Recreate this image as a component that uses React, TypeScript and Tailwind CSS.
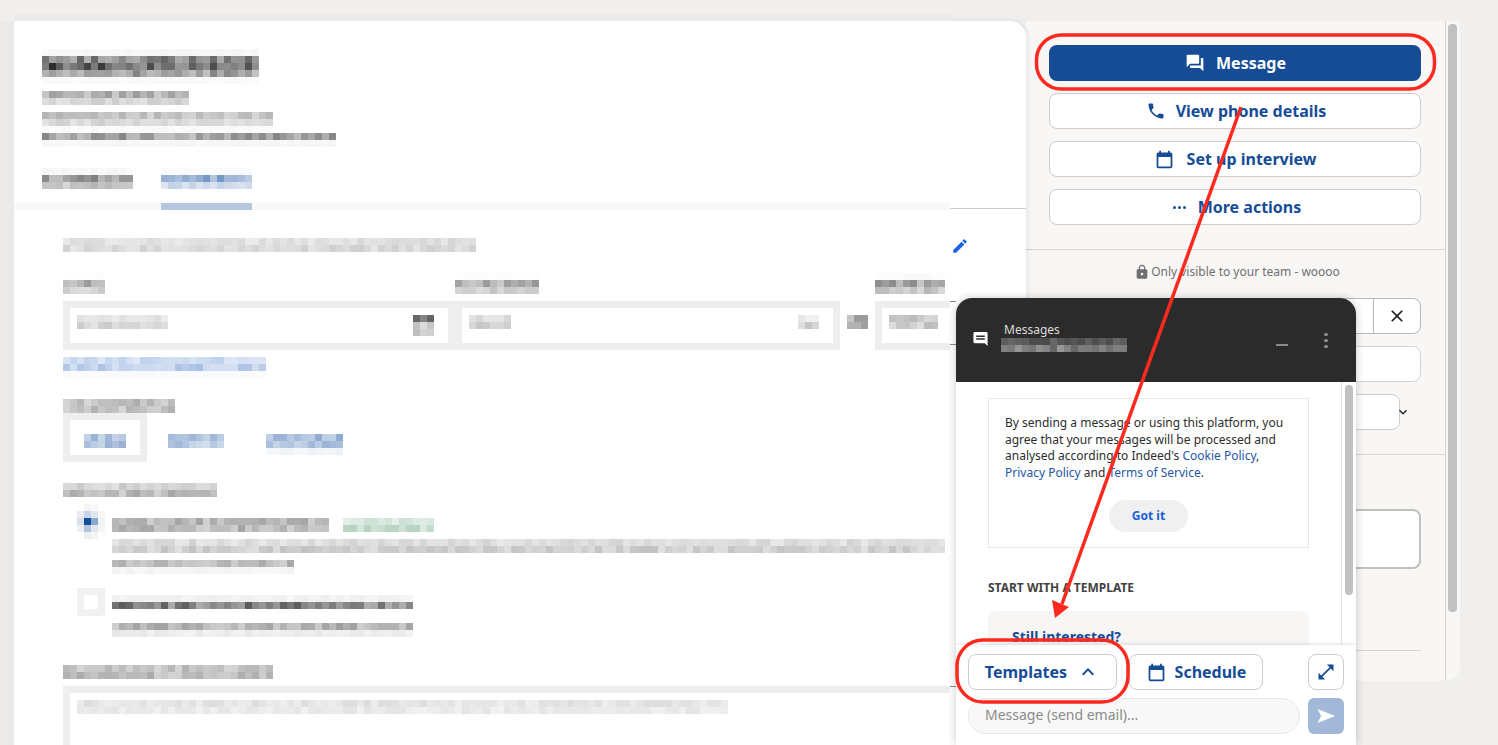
import React from 'react';

const blue = 'text-[#164c96]';

// pixelated block, the reference has its private text blurred out in 7px cells
function Mosaic({
  cols,
  rows,
  rgb = '0,0,0',
  seed = 1,
  className = '',
}: {
  cols: number;
  rows: number[];
  rgb?: string;
  seed?: number;
  className?: string;
}) {
  let n = seed * 7919 + cols * 31;
  const next = () => {
    n = (n * 1103515245 + 12345) & 0x7fffffff;
    return ((n >> 8) % 1000) / 1000;
  };
  return (
    <div className={`flex flex-col ${className}`}>
      {rows.map((a, r) => (
        <div key={r} className="flex">
          {Array.from({ length: cols }).map((_, c) => (
            <div
              key={c}
              className="h-[7px] w-[7px] shrink-0"
              style={{ backgroundColor: `rgba(${rgb},${(a * (0.65 + next() * 0.7)).toFixed(3)})` }}
            />
          ))}
        </div>
      ))}
    </div>
  );
}

function Icon({ d, className = '' }: { d: string; className?: string }) {
  return (
    <svg viewBox="0 0 24 24" fill="currentColor" className={className}>
      <path d={d} />
    </svg>
  );
}

const forum = 'M21 6h-2v9H6v2c0 .55.45 1 1 1h11l4 4V7c0-.55-.45-1-1-1zm-4 6V3c0-.55-.45-1-1-1H3c-.55 0-1 .45-1 1v14l4-4h10c.55 0 1-.45 1-1z';
const phone = 'M6.62 10.79c1.44 2.83 3.76 5.14 6.59 6.59l2.2-2.2c.27-.27.67-.36 1.02-.24 1.12.37 2.33.57 3.57.57.55 0 1 .45 1 1V20c0 .55-.45 1-1 1-9.39 0-17-7.61-17-17 0-.55.45-1 1-1h3.5c.55 0 1 .45 1 1 0 1.25.2 2.45.57 3.57.11.35.03.74-.25 1.02l-2.2 2.2z';
const calendar = 'M19 4h-1V2h-2v2H8V2H6v2H5c-1.1 0-2 .9-2 2v14c0 1.1.9 2 2 2h14c1.1 0 2-.9 2-2V6c0-1.1-.9-2-2-2zm0 16H5V9h14v11z';
const lock = 'M18 8h-1V6c0-2.76-2.24-5-5-5S7 3.24 7 6v2H6c-1.1 0-2 .9-2 2v10c0 1.1.9 2 2 2h12c1.1 0 2-.9 2-2V10c0-1.1-.9-2-2-2zm-6 9c-1.1 0-2-.9-2-2s.9-2 2-2 2 .9 2 2-.9 2-2 2zm3.1-9H8.9V6c0-1.71 1.39-3.1 3.1-3.1 1.71 0 3.1 1.39 3.1 3.1v2z';
const comment = 'M21.99 4c0-1.1-.89-2-1.99-2H4c-1.1 0-2 .9-2 2v12c0 1.1.9 2 2 2h14l4 4-.01-18zM18 13H6v-2h12v2zm0-4H6V7h12v2z';
const edit = 'M3 17.25V21h3.75L17.81 9.94l-3.75-3.75L3 17.25zM20.71 7.04c.39-.39.39-1.02 0-1.41l-2.34-2.34c-.39-.39-1.02-.39-1.41 0l-1.83 1.83 3.75 3.75 1.83-1.83z';
const expand = 'M21 11V3h-8l3.29 3.29-10 10L3 13v8h8l-3.29-3.29 10-10z';
const send = 'M2 20.5 23 12 2 3.5 6 12z';
const close = 'M19 6.41 17.59 5 12 10.59 6.41 5 5 6.41 10.59 12 5 17.59 6.41 19 12 13.41 17.59 19 19 17.59 13.41 12z';
const chevronUp = 'M7.41 15.41 12 10.83l4.59 4.58L18 14l-6-6-6 6z';
const chevronDown = 'M7.41 8.59 12 13.17l4.59-4.58L18 10l-6 6-6-6z';

function ActionButton({ icon, label }: { icon: React.ReactNode; label: string }) {
  return (
    <div className={`flex h-9 items-center justify-center gap-3 rounded-lg border border-[#cfcdca] bg-white text-base font-bold ${blue}`}>
      {icon}
      <span>{label}</span>
    </div>
  );
}

function BlurredForm() {
  return (
    <div className="w-[936px] shrink-0 overflow-hidden">
      <div className="pl-[28px] pt-[28px]">
        <Mosaic cols={31} rows={[0.03, 0.45, 0.62, 0.36, 0.02]} seed={2} />
        <Mosaic cols={21} rows={[0.3, 0.16]} seed={3} className="mt-[7px]" />
        <Mosaic cols={33} rows={[0.22, 0.15, 0.02]} seed={4} className="mt-[7px]" />
        <Mosaic cols={42} rows={[0.36, 0.03]} seed={5} />
        <div className="mt-[21px] flex gap-[28px]">
          <Mosaic cols={13} rows={[0.03, 0.38, 0.22]} seed={6} />
          <Mosaic cols={13} rows={[0.03, 0.45, 0.2]} rgb="22,80,160" seed={7} />
        </div>
      </div>
      <div className="mt-[14px] flex h-[7px]">
        <div className="w-[147px] bg-[#f8f8f7]" />
        <div className="w-[91px] bg-[#b5c6df]" />
        <div className="flex-1 bg-[#f8f8f7]" />
      </div>

      <div className="pl-[49px]">
        <Mosaic cols={59} rows={[0.12, 0.14]} seed={8} className="mt-[28px]" />

        <div className="mt-[21px] flex">
          <Mosaic cols={6} rows={[0.01, 0.32, 0.2]} seed={9} className="w-[392px] shrink-0" />
          <Mosaic cols={12} rows={[0.01, 0.32, 0.2]} seed={10} className="w-[420px] shrink-0" />
          <Mosaic cols={10} rows={[0.02, 0.34, 0.22]} seed={11} />
        </div>
        <div className="mt-[7px] flex">
          <div className="flex h-[49px] w-[392px] shrink-0 items-start justify-between border-[7px] border-[#eeeeee] px-[7px] pt-[7px]">
            <Mosaic cols={13} rows={[0.1, 0.16]} seed={12} />
            <Mosaic cols={3} rows={[0.5, 0.22, 0.2]} seed={13} className="mr-[7px]" />
          </div>
          <div className="flex h-[49px] w-[385px] shrink-0 items-start justify-between border-[7px] border-[#eeeeee] px-[7px] pt-[7px]">
            <Mosaic cols={6} rows={[0.13, 0.2]} seed={14} />
            <Mosaic cols={3} rows={[0.08, 0.2]} seed={15} className="mr-[7px]" />
          </div>
          <Mosaic cols={3} rows={[0.3, 0.3]} seed={16} className="mx-[7px] mt-[14px] shrink-0" />
          <div className="flex h-[49px] w-[100px] shrink-0 items-start gap-[7px] border-[7px] border-r-0 border-[#eeeeee] px-[7px] pt-[7px]">
            <Mosaic cols={7} rows={[0.2, 0.2]} seed={17} />
          </div>
        </div>
        <Mosaic cols={29} rows={[0.22, 0.3, 0.03]} rgb="40,100,190" seed={18} className="mt-[7px]" />

        <Mosaic cols={16} rows={[0.24, 0.24]} seed={19} className="mt-[21px]" />
        <div className="flex items-start gap-[21px]">
          <div className="h-[49px] w-[84px] border-[7px] border-[#eeeeee] px-[14px] pt-[14px]">
            <Mosaic cols={6} rows={[0.36, 0.36]} rgb="22,80,160" seed={20} />
          </div>
          <Mosaic cols={8} rows={[0.36, 0.3]} rgb="22,80,160" seed={21} className="mt-[21px]" />
          <Mosaic cols={11} rows={[0.36, 0.34, 0.06]} rgb="22,80,160" seed={22} className="ml-[21px] mt-[21px]" />
        </div>

        <Mosaic cols={22} rows={[0.18, 0.26]} seed={23} className="mt-[21px]" />

        <div className="mt-[7px] flex">
          <div className="ml-[14px] mr-[7px] grid h-[35px] w-[28px] shrink-0 grid-cols-[7px_7px_7px_7px] grid-rows-[7px_7px_7px_7px_7px]">
            <div className="bg-white" />
            <div className="bg-[#f4f4f4]" />
            <div className="bg-[#f8f8f8]" />
            <div className="bg-white" />
            <div className="bg-[#ebedf1]" />
            <div className="bg-[#c8d5e8]" />
            <div className="bg-[#e0e6ef]" />
            <div className="bg-[#f6f6f6]" />
            <div className="bg-[#d9e0ec]" />
            <div className="bg-[#134f9c]" />
            <div className="bg-[#8aa7d0]" />
            <div className="bg-[#f2f2f2]" />
            <div className="bg-[#eff0f3]" />
            <div className="bg-[#b3c6e0]" />
            <div className="bg-[#e0e6ef]" />
            <div className="bg-[#f6f6f6]" />
            <div className="bg-white" />
            <div className="bg-[#eeeeee]" />
            <div className="bg-[#f4f4f4]" />
            <div className="bg-white" />
          </div>
          <div className="pt-[14px]">
            <div className="flex gap-[14px]">
              <Mosaic cols={31} rows={[0.27, 0.26]} seed={25} />
              <Mosaic cols={13} rows={[0.2, 0.27]} rgb="50,130,80" seed={26} />
            </div>
            <Mosaic cols={119} rows={[0.13, 0.18]} seed={27} className="mt-[7px]" />
            <Mosaic cols={26} rows={[0.26, 0.04]} seed={28} className="mt-[7px]" />
          </div>
        </div>

        <div className="mt-[14px] flex">
          <div className="ml-[14px] mr-[7px] h-[28px] w-[28px] shrink-0 border-[7px] border-[#f1f1f1]" />
          <div className="pt-[7px]">
            <Mosaic cols={43} rows={[0.05, 0.48]} seed={29} />
            <Mosaic cols={43} rows={[0.28, 0.07]} seed={30} className="mt-[14px]" />
          </div>
        </div>

        <Mosaic cols={30} rows={[0.22, 0.25]} seed={31} className="mt-[28px]" />
        <div className="mt-[7px] h-[80px] border-l-[7px] border-t-[7px] border-[#eeeeee] pl-[7px] pt-[7px]">
          <Mosaic cols={93} rows={[0.1, 0.08]} seed={32} />
        </div>
      </div>
    </div>
  );
}

function ChatWindow() {
  return (
    <div className="absolute left-[956px] top-[298px] z-10 flex h-[447px] w-[400px] flex-col overflow-hidden rounded-t-2xl bg-white shadow-[0_0_8px_rgba(0,0,0,0.22)]">
      <div className="flex h-[84px] shrink-0 bg-[#2b2b2b] pt-[31px] text-[#e4e4e4]">
        <Icon d={comment} className="ml-[16px] mt-[1px] h-[18px] w-[17px] text-white" />
        <div className="ml-[15px] w-[272px]">
          <div className="-mt-[8px] text-xs leading-[18px] text-[#dddddd]">Messages</div>
          <Mosaic cols={18} rows={[0.22, 0.38]} rgb="255,255,255" seed={40} className="-ml-[3px] mt-[-1px]" />
        </div>
        <div className="mt-[15px] h-[2px] w-[12px] bg-[#8a8a8a]" />
        <div className="ml-[36px] mt-[4px] flex flex-col gap-[3px]">
          <div className="h-[3px] w-[4px] rounded-full bg-[#8a8a8a]" />
          <div className="h-[3px] w-[4px] rounded-full bg-[#8a8a8a]" />
          <div className="h-[3px] w-[4px] rounded-full bg-[#8a8a8a]" />
        </div>
      </div>

      <div className="relative flex min-h-0 flex-1">
        <div className="w-[385px] shrink-0 px-[32px] pt-[16px]">
          <div className="h-[150px] w-[321px] border border-[#e8e8e8] px-[16px] pt-[16px] text-xs leading-[16.67px] text-[#2d2d2d]">
            <p>
              By sending a message or using this platform, you agree that your messages will be processed and analysed according to Indeed's{' '}
              <span className="text-[#2557a7]">Cookie Policy</span>, <span className="text-[#2557a7]">Privacy Policy</span> and{' '}
              <span className="text-[#2557a7]">Terms of Service</span>.
            </p>
            <div className="mt-[18px] flex justify-center">
              <div className="flex h-[32px] w-[79px] items-center justify-center rounded-full bg-[#f0f0f0] text-xs font-bold text-[#1a5fd8]">
                Got it
              </div>
            </div>
          </div>
          <div className="mt-[31px] text-xs font-bold leading-[18px] text-[#424242]">START WITH A TEMPLATE</div>
          <div className="mt-[14px] h-[80px] w-[321px] rounded-lg bg-[#f7f6f5] pl-[24px] pt-[16px] text-sm font-bold text-[#164c96]">
            Still interested?
          </div>
        </div>
        <div className="flex-1 border-l border-[#e4e2e0] pl-[3px] pt-[3px]">
          <div className="h-[210px] w-[8px] rounded bg-[#c1c1c1]" />
        </div>

        <div className="absolute bottom-0 left-0 right-0 flex h-[100px] flex-col gap-[8px] bg-white px-[12px] pt-[9px] shadow-[0_-1px_3px_rgba(0,0,0,0.12)]">
          <div className="flex">
            <div className={`flex h-9 w-[149px] items-center justify-center gap-[9px] rounded-lg border border-[#cfcdca] text-base font-bold ${blue}`}>
              <span>Templates</span>
              <Icon d={chevronUp} className="h-6 w-6" />
            </div>
            <div className={`ml-[12px] flex h-9 w-[134px] items-center justify-center gap-[8px] rounded-lg border border-[#cfcdca] text-base font-bold ${blue}`}>
              <Icon d={calendar} className="h-[21px] w-[21px]" />
              <span>Schedule</span>
            </div>
            <div className={`ml-auto flex h-9 w-9 items-center justify-center rounded-lg border border-[#cfcdca] ${blue}`}>
              <Icon d={expand} className="h-[20px] w-[20px]" />
            </div>
          </div>
          <div className="flex gap-[8px]">
            <div className="flex h-9 w-[332px] items-center rounded-full border border-[#e8e8e8] bg-[#f8f8f8] px-[16px] pb-[2px] text-sm text-[#8a8a8a]">
              Message (send email)...
            </div>
            <div className="flex h-9 w-9 items-center justify-center rounded-md bg-[#a2b8d8] text-white">
              <Icon d={send} className="h-[20px] w-[20px]" />
            </div>
          </div>
        </div>
      </div>
    </div>
  );
}

export default function App() {
  return (
    <div
      className="relative flex h-[745px] w-[1498px] items-start overflow-hidden bg-[#f0efed] pl-[14px] pt-[21px]"
      style={{ fontFamily: '"Noto Sans", sans-serif' }}
    >
      {/* Candidate form, blurred */}
      <div className="relative z-[1] flex h-[760px] w-[1012px] shrink-0 rounded-tr-2xl bg-white shadow-[-14px_0_0_#ebeae8,2px_0_5px_rgba(0,0,0,0.07)]">
        <div className="absolute -top-[7px] left-0 h-[7px] w-[936px] bg-[#ebeae8]" />
        <BlurredForm />
        <div className="mt-[61px] flex-1">
          <div className="flex h-[126px] flex-col">
            <Icon d={edit} className="relative left-[1px] top-[155px] h-[18px] w-[18px] text-[#1a62e8]" />
          </div>
        </div>
        <div className="absolute left-[936px] top-[187px] h-px w-[76px] bg-[#cfcdca]" />
        <div className="absolute left-[936px] top-[280px] h-px w-[6px] bg-[#8a8a8a]" />
        <div className="absolute left-[936px] top-[323px] h-px w-[6px] bg-[#8a8a8a]" />
        <div className="absolute left-[936px] top-[665px] h-px w-[6px] bg-[#8a8a8a]" />
      </div>

      {/* Actions panel */}
      <div className="flex h-[660px] w-[434px] shrink-0 rounded-br-2xl bg-[#f8f7f6]">
        <div className="w-[420px] shrink-0 border-r border-[#d6d4d1]">
          <div className="ml-[23px] mr-[24px] flex flex-col gap-3 pt-[24px]">
            <div className="flex h-9 items-center justify-center gap-3 rounded-lg bg-[#164c96] text-base font-bold text-white">
              <Icon d={forum} className="h-[20px] w-[20px] translate-x-[1px]" />
              <span>Message</span>
            </div>
            <ActionButton icon={<Icon d={phone} className="h-[20px] w-[20px] translate-x-[2px]" />} label="View phone details" />
            <ActionButton icon={<Icon d={calendar} className="h-[21px] w-[21px]" />} label="Set up interview" />
            <ActionButton
              icon={
                <span className="ml-[4px] flex gap-[2px]">
                  <span className="h-[3px] w-[3px] rounded-full bg-[#164c96]" />
                  <span className="h-[3px] w-[3px] rounded-full bg-[#164c96]" />
                  <span className="h-[3px] w-[3px] rounded-full bg-[#164c96]" />
                </span>
              }
              label="More actions"
            />
          </div>
          <div className="mt-[24px] h-px bg-[#d6d4d1]" />
          <div className="ml-[3px] mt-[13px] flex items-center justify-center gap-[1px] text-xs leading-[18px] text-[#6f6f6f]">
            <Icon d={lock} className="h-[16px] w-[16px]" />
            <span>Only visible to your team - woooo</span>
          </div>
          <div className="ml-[23px] mr-[24px] mt-[17px] flex h-9 justify-end rounded-lg border border-[#b9b7b4] bg-white">
            <div className="flex w-[47px] items-center justify-center border-l border-[#b9b7b4]">
              <Icon d={close} className="h-[20px] w-[20px] text-[#222222]" />
            </div>
          </div>
          <div className="ml-[23px] mr-[24px] mt-[12px] h-9 rounded-lg border border-[#d6d4d1] bg-white" />
          <div className="ml-[23px] mt-[12px] flex items-center">
            <div className="h-9 w-[351px] rounded-lg border border-[#cfcdca] bg-white" />
            <Icon d={chevronDown} className="-ml-[5px] h-[16px] w-[16px] text-[#222222]" />
          </div>
          <div className="mt-[24px] h-px bg-[#d6d4d1]" />
          <div className="ml-[23px] mr-[24px] mt-[54px] h-[60px] rounded-lg border-2 border-[#c2c0bd] bg-white" />
          <div className="ml-[23px] mr-[24px] mt-[81px] h-px bg-[#d6d4d1]" />
        </div>
        <div className="pl-[2px] pt-[3px]">
          <div className="h-[588px] w-[9px] rounded bg-[#c1c1c1]" />
        </div>
      </div>

      <ChatWindow />

      {/* Red annotations */}
      <svg className="pointer-events-none absolute left-0 top-0 z-20 h-[745px] w-[1498px]" viewBox="0 0 1498 745" fill="none">
        <rect x="1036.5" y="35" width="398" height="54" rx="25" stroke="#ff2a1f" strokeWidth="3.5" />
        <rect x="957" y="640" width="171" height="62" rx="26" stroke="#ff2a1f" strokeWidth="3.5" />
        <path d="M1241 107 1062 604" stroke="#ff2a1f" strokeWidth="3.5" />
        <path d="M1055 618 1052 600 1069 607z" fill="#ff2a1f" />
      </svg>
    </div>
  );
}
